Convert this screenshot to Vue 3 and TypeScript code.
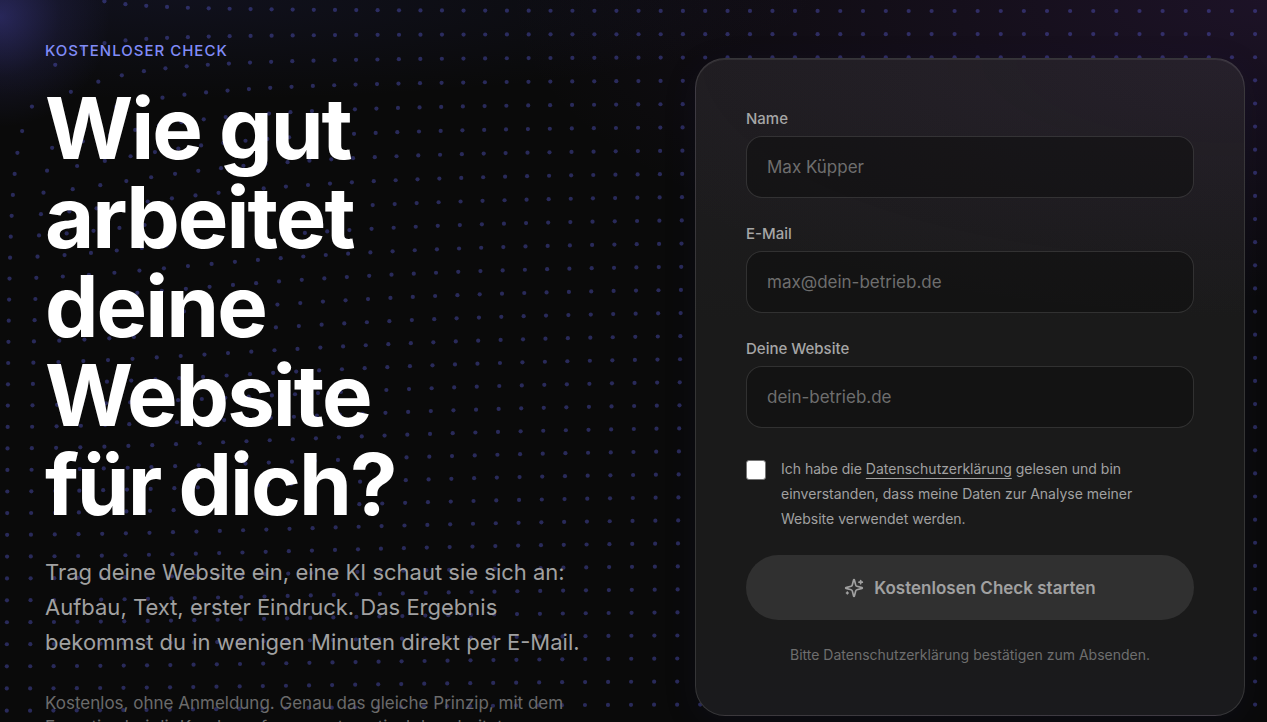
<script setup lang="ts">
import { computed, onBeforeUnmount, onMounted, reactive, ref } from 'vue'

interface Dot {
  x: number
  y: number
}

interface Field {
  id: 'name' | 'email' | 'website'
  label: string
  type: string
  placeholder: string
}

const fields: Field[] = [
  { id: 'name', label: 'Name', type: 'text', placeholder: 'Max Küpper' },
  { id: 'email', label: 'E-Mail', type: 'email', placeholder: 'max@dein-betrieb.de' },
  { id: 'website', label: 'Deine Website', type: 'text', placeholder: 'dein-betrieb.de' },
]

const form = reactive({ name: '', email: '', website: '' })
const accepted = ref(false)

/* Dot grid that is pushed away from a focus point. */
const PITCH = 23.12
const ORIGIN = { x: 6.6, y: 11 }
const FOCUS = { x: -11, y: 23 }
const REACH = 1000
const PUSH = 60

const size = reactive({ width: window.innerWidth, height: window.innerHeight })

function measure(): void {
  size.width = window.innerWidth
  size.height = window.innerHeight
}

onMounted(() => window.addEventListener('resize', measure))
onBeforeUnmount(() => window.removeEventListener('resize', measure))

const dots = computed<Dot[]>(() => {
  const list: Dot[] = []
  const columns = Math.ceil(size.width / PITCH) + 1
  const rows = Math.ceil(size.height / PITCH) + 1
  for (let row = -2; row < rows; row++) {
    for (let column = -2; column < columns; column++) {
      const x = ORIGIN.x + column * PITCH
      const y = ORIGIN.y + row * PITCH
      const dx = x - FOCUS.x
      const dy = y - FOCUS.y
      const distance = Math.hypot(dx, dy) || 1
      const push = PUSH * Math.max(0, 1 - distance / REACH) ** 2
      list.push({ x: x + (dx / distance) * push, y: y + (dy / distance) * push })
    }
  }
  return list
})
</script>

<template>
  <main class="page">
    <svg class="dots" aria-hidden="true">
      <circle v-for="(dot, index) in dots" :key="index" :cx="dot.x" :cy="dot.y" r="2.1" />
    </svg>

    <section class="intro">
      <p class="eyebrow">Kostenloser Check</p>
      <h1>Wie gut<br />arbeitet<br />deine<br />Website<br />für dich?</h1>
      <p class="lead">
        Trag deine Website ein, eine KI schaut sie sich an:<br />
        Aufbau, Text, erster Eindruck. Das Ergebnis<br />
        bekommst du in wenigen Minuten direkt per E-Mail.
      </p>
      <p class="small">
        Kostenlos, ohne Anmeldung. Genau das gleiche Prinzip, mit dem<br />
        Expertise bei dir Kundenanfragen automatisch bearbeitet.
      </p>
    </section>

    <form class="card" @submit.prevent>
      <div v-for="field in fields" :key="field.id" class="field">
        <label :for="field.id">{{ field.label }}</label>
        <input
          :id="field.id"
          v-model="form[field.id]"
          :type="field.type"
          :placeholder="field.placeholder"
        />
      </div>

      <div class="consent">
        <input id="consent" v-model="accepted" type="checkbox" />
        <label for="consent">
          Ich habe die <a href="#datenschutz">Datenschutzerklärung</a> gelesen und bin
          einverstanden, dass meine Daten zur Analyse meiner Website verwendet werden.
        </label>
      </div>

      <button type="submit" class="submit" :disabled="!accepted">
        <svg class="spark" viewBox="0 0 24 24" aria-hidden="true">
          <path
            d="M9.937 15.5A2 2 0 0 0 8.5 14.063l-6.135-1.582a.5.5 0 0 1 0-.962L8.5 9.936A2 2 0 0 0 9.937 8.5l1.582-6.135a.5.5 0 0 1 .963 0L14.063 8.5A2 2 0 0 0 15.5 9.937l6.135 1.581a.5.5 0 0 1 0 .964L15.5 14.063a2 2 0 0 0-1.437 1.437l-1.582 6.135a.5.5 0 0 1-.963 0z"
          />
          <path d="M20 3v4M22 5h-4M4 17v2M5 18H3" />
        </svg>
        <span>Kostenlosen Check starten</span>
      </button>
      <p class="hint">Bitte Datenschutzerklärung bestätigen zum Absenden.</p>
    </form>
  </main>
</template>

<style>
body {
  margin: 0;
  background: #0a0a0a;
}
</style>

<style scoped>
.page {
  position: relative;
  box-sizing: border-box;
  display: grid;
  grid-template-columns: minmax(0, 1fr) minmax(0, 1fr);
  align-items: start;
  gap: 100px;
  height: 100vh;
  padding: 0 22px 0 45px;
  overflow: hidden;
  color: #fff;
  font-family: Inter, 'Liberation Sans', sans-serif;
  background:
    radial-gradient(circle at 0 17px, rgba(79, 76, 190, 0.4), rgba(79, 76, 190, 0.12) 60px, transparent 110px),
    radial-gradient(ellipse 640px 100px at 180px 0, rgba(70, 75, 190, 0.1), transparent),
    radial-gradient(ellipse 760px 300px at 100% 0, rgba(120, 60, 180, 0.17), transparent),
    #0a0a0a;
}

.dots {
  position: absolute;
  inset: 0;
  width: 100%;
  height: 100%;
  fill: rgba(99, 102, 241, 0.35);
}

.intro {
  position: relative;
  padding-top: 41px;
}

p {
  margin: 0;
}

.eyebrow {
  color: #818cf8;
  font-size: 15px;
  font-weight: 500;
  line-height: 20px;
  letter-spacing: 1px;
  text-transform: uppercase;
}

h1 {
  margin: 23px 0 0;
  font-size: 85px;
  font-weight: 700;
  line-height: 89px;
  letter-spacing: -2px;
}

.lead {
  margin-top: 26px;
  color: #a1a1a1;
  font-size: 22px;
  line-height: 35px;
  white-space: nowrap;
}

.small {
  margin-top: 31px;
  color: #6b6b6b;
  font-size: 17px;
  line-height: 24px;
  white-space: nowrap;
}

.card {
  position: relative;
  margin-top: 58px;
  padding: 50px 50px 49px;
  border: 1px solid rgba(255, 255, 255, 0.12);
  border-radius: 30px;
  background:
    radial-gradient(ellipse 700px 260px at 100% 0, rgba(120, 70, 170, 0.08), transparent),
    linear-gradient(#1f1d20, #1a1a1a 40%, #1a1a1a 85%, #1a1a1d);
  box-shadow:
    inset 0 1px 0 rgba(255, 255, 255, 0.08),
    0 8px 32px rgba(30, 25, 80, 0.15);
}

.field {
  display: flex;
  flex-direction: column;
  gap: 7px;
  margin-bottom: 26px;
}

.field label {
  color: #a6a6a6;
  font-size: 15px;
  font-weight: 500;
  line-height: 20px;
}

.field input {
  box-sizing: border-box;
  width: 100%;
  height: 62px;
  padding: 0 20px;
  border: 1px solid rgba(255, 255, 255, 0.13);
  border-radius: 16px;
  outline: none;
  background: rgba(12, 12, 12, 0.5);
  color: #fff;
  font: inherit;
  font-size: 17px;
}

.field input::placeholder {
  color: #6e6e6e;
  opacity: 1;
}

.consent {
  display: flex;
  align-items: flex-start;
  gap: 15px;
  margin-top: 28px;
}

.consent input {
  flex: none;
  appearance: none;
  width: 20px;
  height: 20px;
  margin: 4px 0 0;
  border: 1px solid #767676;
  border-radius: 3px;
  background: #fff;
}

.consent input:checked {
  background: #6366f1;
}

.consent label {
  max-width: 380px;
  color: #a1a1a1;
  font-size: 14px;
  line-height: 25px;
}

.consent a {
  color: inherit;
  text-decoration: underline;
  text-underline-offset: 4px;
}

.submit {
  display: flex;
  align-items: center;
  justify-content: center;
  gap: 10px;
  width: 100%;
  height: 65px;
  margin-top: 24px;
  border: 0;
  border-radius: 33px;
  background: #303030;
  color: #a1a1a1;
  font: inherit;
  font-size: 17px;
  font-weight: 600;
}

.spark {
  width: 20px;
  height: 20px;
  fill: none;
  stroke: currentColor;
  stroke-width: 2;
  stroke-linecap: round;
  stroke-linejoin: round;
}

.hint {
  margin-top: 24px;
  color: #6e6e6e;
  font-size: 14px;
  line-height: 22px;
  text-align: center;
}
</style>
